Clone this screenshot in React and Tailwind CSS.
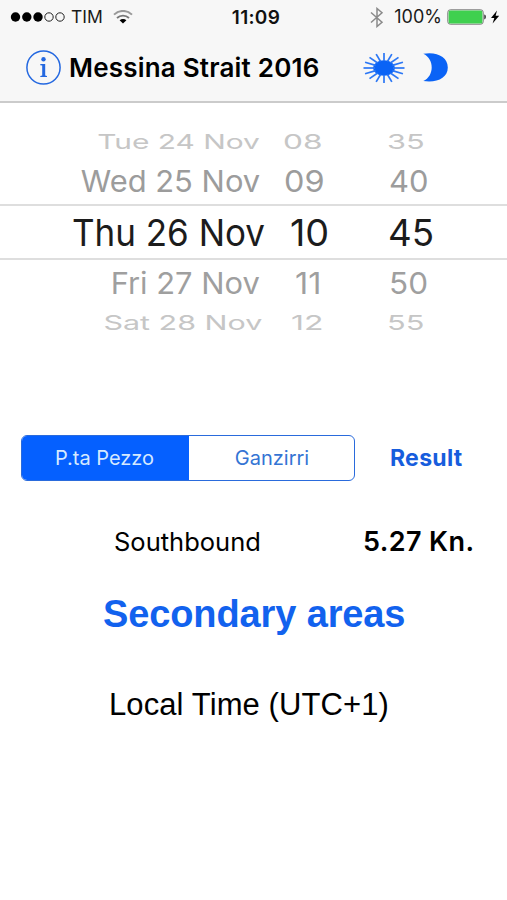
import React from 'react';

const rows = [
  { day: 'Tue 24 Nov', hour: '08', minute: '35', row: 'h-[33px] text-[29px] text-[#c6c6c6]', d: 'mr-[5px] scale-x-[1.03] scale-y-[0.7]', h: 'ml-[18px] scale-x-[1.09] scale-y-[0.7]', m: 'ml-[122px] scale-x-[1.06] scale-y-[0.7]' },
  { day: 'Wed 25 Nov', hour: '09', minute: '40', row: 'h-[46px] text-[30px] text-[#9c9c9c]', d: 'mr-[5px] scale-x-[1.03]', h: 'ml-[19px] scale-x-[1.08]', m: 'ml-[124px] scale-x-[1.03]' },
  { day: 'Thu 26 Nov', hour: '10', minute: '45', row: 'h-[56px] border-y-2 border-[#dedede] text-[35px] text-[#1c1c1c]', d: 'scale-y-[1.06]', h: 'ml-[25px] scale-x-[1.08] scale-y-[1.06]', m: 'ml-[123px] scale-x-[1.05] scale-y-[1.06]' },
  { day: 'Fri 27 Nov', hour: '11', minute: '50', row: 'h-[46px] text-[30px] text-[#9f9f9f]', d: 'mr-[5px] scale-x-[1.03]', h: 'ml-[30px] scale-x-[1.08]', m: 'ml-[124px] scale-x-[1.05]' },
  { day: 'Sat 28 Nov', hour: '12', minute: '55', row: 'h-[33px] text-[29px] text-[#c6c6c6]', d: 'mr-[3px] scale-x-[1.05] scale-y-[0.7]', h: 'ml-[26px] scale-x-[1.1] scale-y-[0.7]', m: 'ml-[122px] scale-x-[1.06] scale-y-[0.7]' },
];

const rays = Array.from({ length: 16 }, (_, i) => (i * Math.PI) / 8);

function StatusBar() {
  return (
    <div className="grid h-[34px] grid-cols-[1fr_auto_1fr] items-center text-[17px] leading-none">
      <div className="flex items-center pl-[10px]">
        <svg width="56" height="12" viewBox="0 0 56 12">
          <circle cx="5.5" cy="6" r="4.7" />
          <circle cx="16.8" cy="6" r="4.7" />
          <circle cx="28" cy="6" r="4.7" />
          <circle cx="39" cy="6" r="4.2" fill="none" stroke="#222" strokeWidth="1" />
          <circle cx="50" cy="6" r="4.2" fill="none" stroke="#222" strokeWidth="1" />
        </svg>
        <span className="ml-[5px] text-[17.5px] text-[#1a1a1a]">TIM</span>
        <svg className="ml-[10px]" width="20" height="14" viewBox="0 0 20 14" fill="none">
          <path d="M1 4.6C6 -.3 14 -.3 19 4.6" stroke="#999" strokeWidth="2" />
          <path d="M4 8C7.3 4.8 12.7 4.8 16 8" stroke="#777" strokeWidth="1.8" />
          <path d="M6.6 10.3c1.9-1.7 4.9-1.7 6.8 0L10 13.6z" fill="#000" />
        </svg>
      </div>
      <span className="pl-[5px] text-[19px] font-semibold tracking-[0.3px] text-[#111]">11:09</span>
      <div className="flex items-center justify-end pr-[7px]">
        <svg width="14" height="21" viewBox="0 0 14 21" fill="none" stroke="#8a8a8a" strokeWidth="1.5">
          <path d="M1 5.5l11 9.8-5 4.2V1.5l5 4.2L1 15.5" />
        </svg>
        <span className="ml-[10px] text-[18px] text-[#1a1a1a]">100%</span>
        <svg className="ml-[5px]" width="40" height="16" viewBox="0 0 40 16">
          <rect x=".8" y=".8" width="35.4" height="14.4" rx="2.5" fill="#fff" stroke="#777" strokeWidth="1" />
          <rect x="1.6" y="1.6" width="33.8" height="12.8" rx="1.5" fill="#3fd04f" />
          <path d="M37.4 5.6c1.8.4 1.8 4.4 0 4.8z" fill="#111" />
        </svg>
        <svg className="ml-[3px]" width="10" height="14" viewBox="0 0 10 14">
          <path d="M7 .5L1 8h3.3L2.6 13.5 9.2 5.8H5.6z" />
        </svg>
      </div>
    </div>
  );
}

function TitleBar() {
  return (
    <div className="flex h-[67px] items-center pl-[26px]">
      <svg width="35" height="35" viewBox="0 0 35 35" fill="#2468e0">
        <circle cx="17.5" cy="17.5" r="16.6" fill="none" stroke="#2468e0" strokeWidth="1.5" />
        <circle cx="17.5" cy="9.3" r="2.2" />
        <path d="M14.3 14h4.9v11.5l1.8.4v1.1h-6.7v-1.1l1.9-.4V15.6l-1.9-.4z" />
      </svg>
      <h1 className="ml-[8px] w-[287px] text-[26px] font-semibold tracking-[0.2px] whitespace-nowrap">Messina Strait 2016</h1>
      <svg className="ml-[7px]" width="42" height="32" viewBox="-21 -16 42 32">
        <ellipse rx="11" ry="7.8" fill="#0a63f6" />
        {rays.map((a) => (
          <line key={a} x1={9 * Math.cos(a)} y1={7 * Math.sin(a)} x2={20.5 * Math.cos(a)} y2={15 * Math.sin(a)} stroke="#2b77f5" strokeWidth="1.7" />
        ))}
      </svg>
      <svg className="ml-[18px]" width="26" height="29" viewBox="0 0 26 29">
        <path d="M.3 .8C14 -1.500 24.800 4 24.800 14.500S14 30 .300 28C11.500 23 11.500 6 .300 .8z" fill="#0a63f6" />
      </svg>
    </div>
  );
}

export default function App() {
  return (
    <div className="h-[900px] w-[507px] overflow-hidden bg-white font-['Inter',sans-serif] text-black">
      <header className="h-[103px] border-b-2 border-[#cbcbcb] bg-[#f7f7f7]">
        <StatusBar />
        <TitleBar />
      </header>

      {/* Date and time wheels */}
      <section className="pt-[22px]">
        {rows.map((r) => (
          <div key={r.day} className={`flex items-center leading-none whitespace-nowrap ${r.row}`}>
            <div className="flex w-[265px] justify-end">
              <span className={`origin-right ${r.d}`}>{r.day}</span>
            </div>
            <div className="w-0">
              <span className={`inline-block origin-left ${r.h}`}>{r.hour}</span>
            </div>
            <div className="w-0">
              <span className={`inline-block origin-left ${r.m}`}>{r.minute}</span>
            </div>
          </div>
        ))}
      </section>

      {/* Reference point selector */}
      <section className="mt-[96px] flex h-[46px] items-center pl-[21px]">
        <div className="flex h-[46px] w-[334px] overflow-hidden rounded-[6px] border-[1.5px] border-[#2a6bdc] text-[20px]">
          <button className="w-[167px] bg-[#0560ff] pr-[2px] text-[#d5e9ff]">P.ta Pezzo</button>
          <button className="flex-1 pl-[1px] text-[#3474d4]">Ganzirri</button>
        </div>
        <button className="ml-[35px] text-[23px] font-bold tracking-[0.3px] text-[#175ddd]">Result</button>
      </section>

      <section className="mt-[41px] flex h-[40px] items-center text-[25.5px] whitespace-nowrap">
        <span className="ml-[114px] w-[249px]">Southbound</span>
        <span className="text-[27px] font-semibold tracking-[0.4px]">5.27 Kn.</span>
      </section>

      <h2 className="mt-[31px] pl-[103px] font-['Liberation_Sans',sans-serif] text-[38px] leading-[42px] font-bold tracking-[-0.12px] whitespace-nowrap text-[#1262ee]">
        Secondary areas
      </h2>
      <p className="mt-[49px] pl-[109px] font-['Liberation_Sans',sans-serif] text-[31px] leading-[42px] tracking-[0.1px] whitespace-nowrap">
        Local Time (UTC+1)
      </p>
    </div>
  );
}
